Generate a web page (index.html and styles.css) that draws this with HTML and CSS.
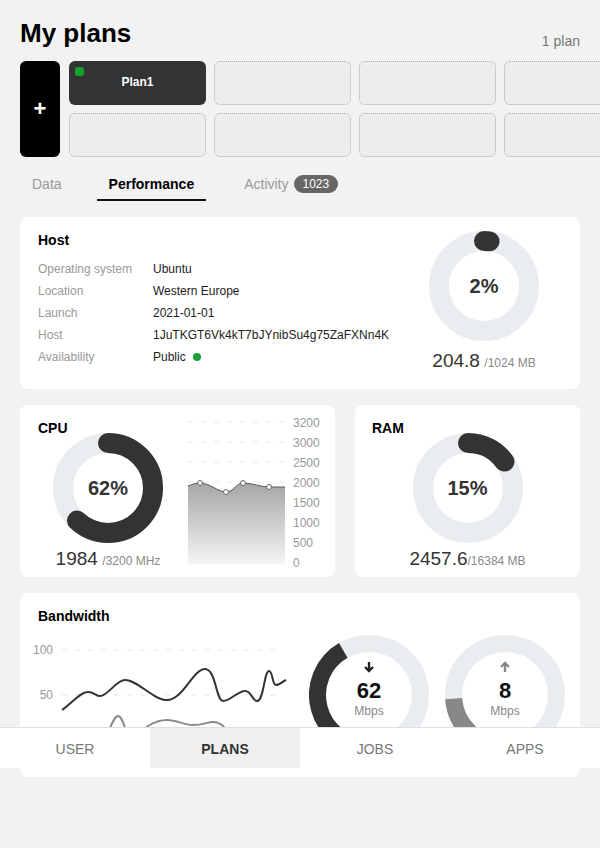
FILE: index.html
```html
<!DOCTYPE html>
<html lang="en">
<head>
<meta charset="utf-8">
<title>My plans</title>
<link rel="stylesheet" href="styles.css">
</head>
<body>
<div class="page">
  <header class="header">
    <h1 class="title">My plans</h1>
    <span class="count">1 plan</span>
  </header>

  <section class="plans">
    <button class="add">+</button>
    <div class="plan-grid">
      <div class="tile active"><span class="tile-dot"></span>Plan1</div>
      <div class="tile empty"></div>
      <div class="tile empty"></div>
      <div class="tile empty"></div>
      <div class="tile empty"></div>
      <div class="tile empty"></div>
      <div class="tile empty"></div>
      <div class="tile empty"></div>
    </div>
  </section>

  <nav class="tabs">
    <a class="tab">Data</a>
    <a class="tab current">Performance</a>
    <a class="tab tab-last">Activity <span class="badge">1023</span></a>
  </nav>

  <section class="card host">
    <div class="host-info">
      <h2 class="card-title">Host</h2>
      <div class="info">
        <span class="info-label">Operating system</span><span class="info-value">Ubuntu</span>
        <span class="info-label">Location</span><span class="info-value">Western Europe</span>
        <span class="info-label">Launch</span><span class="info-value">2021-01-01</span>
        <span class="info-label">Host</span><span class="info-value">1JuTKGT6Vk4kT7bJYnibSu4g75ZaFXNn4K</span>
        <span class="info-label">Availability</span><span class="info-value">Public <span class="green-dot"></span></span>
      </div>
    </div>
    <div class="gauge">
      <div class="ring">
        <svg class="ring-svg" viewBox="0 0 110 110">
          <circle class="track" cx="55" cy="55" r="45"/>
          <circle class="arc" cx="55" cy="55" r="45" stroke-dasharray="5.65 300" transform="rotate(-90 55 55)"/>
        </svg>
        <span class="ring-label">2%</span>
      </div>
      <div class="amount"><span class="amount-big">204.8</span> <span class="amount-small">/1024 MB</span></div>
    </div>
  </section>

  <div class="row">
    <section class="card cpu">
      <div class="cpu-left">
        <h2 class="card-title">CPU</h2>
        <div class="ring ring-offset">
          <svg class="ring-svg" viewBox="0 0 110 110">
            <circle class="track" cx="55" cy="55" r="45"/>
            <circle class="arc" cx="55" cy="55" r="45" stroke-dasharray="175.3 300" transform="rotate(-90 55 55)"/>
          </svg>
          <span class="ring-label">62%</span>
        </div>
        <div class="amount amount-tight"><span class="amount-big">1984</span> <span class="amount-small">/3200 MHz</span></div>
      </div>
      <svg class="cpu-chart" width="137" height="160" viewBox="0 0 137 160">
        <defs>
          <linearGradient id="cpuFill" x1="0" y1="0" x2="0" y2="1">
            <stop offset="0" stop-color="#a6a6a6"/>
            <stop offset="1" stop-color="#f5f5f5"/>
          </linearGradient>
        </defs>
        <g class="grid-lines">
          <line x1="0" y1="10" x2="97" y2="10"/>
          <line x1="0" y1="30" x2="97" y2="30"/>
          <line x1="0" y1="50" x2="97" y2="50"/>
          <line x1="0" y1="70" x2="97" y2="70"/>
          <line x1="0" y1="90" x2="97" y2="90"/>
          <line x1="0" y1="110" x2="97" y2="110"/>
          <line x1="0" y1="130" x2="97" y2="130"/>
          <line x1="0" y1="150" x2="97" y2="150"/>
        </g>
        <path d="M0,74 C5,72 8,71 12,71 C22,71 30,80 38,80 C46,80 48,71 55,71 C65,71 72,75 81,75 C88,75 92,75 97,75 L97,152 L0,152 Z" fill="url(#cpuFill)"/>
        <path d="M0,74 C5,72 8,71 12,71 C22,71 30,80 38,80 C46,80 48,71 55,71 C65,71 72,75 81,75 C88,75 92,75 97,75" fill="none" stroke="#555" stroke-width="1"/>
        <g class="pts">
          <circle cx="12" cy="71" r="2.5"/>
          <circle cx="38" cy="80" r="2.5"/>
          <circle cx="55" cy="71" r="2.5"/>
          <circle cx="81" cy="75" r="2.5"/>
        </g>
        <g class="axis">
          <text x="105" y="14.5">3200</text>
          <text x="105" y="34.5">3000</text>
          <text x="105" y="54.5">2500</text>
          <text x="105" y="74.5">2000</text>
          <text x="105" y="94.5">1500</text>
          <text x="105" y="114.5">1000</text>
          <text x="105" y="134.5">500</text>
          <text x="105" y="154.5">0</text>
        </g>
      </svg>
    </section>

    <section class="card ram">
      <h2 class="card-title">RAM</h2>
      <div class="ring ring-offset">
        <svg class="ring-svg" viewBox="0 0 110 110">
          <circle class="track" cx="55" cy="55" r="45"/>
          <circle class="arc" cx="55" cy="55" r="45" stroke-dasharray="42.4 300" transform="rotate(-90 55 55)"/>
        </svg>
        <span class="ring-label">15%</span>
      </div>
      <div class="amount amount-tight"><span class="amount-big">2457.6</span><span class="amount-small">/16384 MB</span></div>
    </section>
  </div>

  <section class="card bw">
    <h2 class="card-title">Bandwidth</h2>
    <div class="bw-body">
      <svg class="bw-chart" width="270" height="132" viewBox="0 0 270 132">
        <g class="grid-lines">
          <line x1="34" y1="15" x2="255" y2="15"/>
          <line x1="34" y1="60" x2="255" y2="60"/>
          <line x1="34" y1="105" x2="255" y2="105"/>
        </g>
        <g class="axis axis-end">
          <text x="25" y="19">100</text>
          <text x="25" y="64">50</text>
          <text x="25" y="109">0</text>
        </g>
        <path d="M66,118 C78,110 84,81 90,81 C96,81 98,104 106,110 C112,114 114,96 120,91 C128,86 134,85 139,85 C150,85 155,90 165,90 C175,90 180,87 185,87 C195,87 198,95 205,105 C215,118 225,112 232,95 C236,88 242,100 250,112" fill="none" stroke="#8a8a8a" stroke-width="2"/>
        <path d="M34,75 C44,68 52,57 60,57 C66,57 68,61 72,61 C80,61 88,45 97,45 C110,45 125,65 139,65 C155,65 165,34 177,34 C188,34 188,66 195,66 C202,66 210,56 217,56 C224,56 224,66 229,66 C236,66 236,36 241,36 C245,36 244,50 248,50 C252,50 255,46 258,45" fill="none" stroke="#333" stroke-width="2"/>
      </svg>
      <div class="bw-ring">
        <svg class="bw-svg" viewBox="0 0 120 120">
          <circle class="bw-track" cx="60" cy="60" r="51.5"/>
          <path class="bw-arc dark" d="M60,111.5 A51.5,51.5 0 0 1 34.25,15.4"/>
        </svg>
        <div class="bw-inner">
          <svg class="arrow" viewBox="0 0 12 12"><path d="M6,1 V10 M2,6 L6,10 L10,6" fill="none" stroke="#222" stroke-width="2.4"/></svg>
          <span class="bw-num">62</span>
          <span class="bw-unit">Mbps</span>
        </div>
      </div>
      <div class="bw-ring">
        <svg class="bw-svg" viewBox="0 0 120 120">
          <circle class="bw-track" cx="60" cy="60" r="51.5"/>
          <path class="bw-arc light" d="M60,111.5 A51.5,51.5 0 0 1 8.63,63.6"/>
        </svg>
        <div class="bw-inner">
          <svg class="arrow" viewBox="0 0 12 12"><path d="M6,11 V2 M2,6 L6,2 L10,6" fill="none" stroke="#888" stroke-width="2.4"/></svg>
          <span class="bw-num">8</span>
          <span class="bw-unit">Mbps</span>
        </div>
      </div>
    </div>
  </section>
</div>

<nav class="bottom-nav">
  <a class="nav-item">USER</a>
  <a class="nav-item active">PLANS</a>
  <a class="nav-item">JOBS</a>
  <a class="nav-item">APPS</a>
</nav>
</body>
</html>
```

FILE: styles.css
```css
* { box-sizing: border-box; }

html, body {
  margin: 0;
  padding: 0;
  background: #f2f2f2;
  font-family: "Liberation Sans", Arial, sans-serif;
  color: #222;
  overflow: hidden;
}

.page {
  padding: 18px 20px 0 20px;
}

.header {
  display: flex;
  justify-content: space-between;
  align-items: flex-end;
}

.title {
  margin: 0;
  font-size: 26px;
  line-height: 30px;
  font-weight: bold;
  color: #000;
}

.count {
  font-size: 14px;
  line-height: 16px;
  color: #777;
  position: relative;
  top: 1px;
}

.plans {
  display: flex;
  gap: 9px;
  margin-top: 13px;
  margin-right: -20px;
}

.add {
  flex: 0 0 40px;
  height: 96px;
  border: none;
  border-radius: 6px;
  background: #000;
  color: #fff;
  font-family: "Liberation Sans", Arial, sans-serif;
  font-size: 22px;
  font-weight: bold;
  padding: 0;
}

.plan-grid {
  flex: 1;
  min-width: 0;
  overflow: hidden;
  display: grid;
  grid-template-rows: 44px 44px;
  grid-auto-flow: column;
  grid-auto-columns: 137px;
  gap: 8px;
}

.tile {
  border-radius: 6px;
  position: relative;
}

.tile.active {
  background: #333;
  color: #fff;
  font-size: 12px;
  font-weight: bold;
  display: flex;
  align-items: center;
  justify-content: center;
  padding-bottom: 2px;
}

.tile-dot {
  position: absolute;
  left: 6px;
  top: 6px;
  width: 9px;
  height: 9px;
  border-radius: 3px;
  background: #17a033;
}

.tile.empty {
  background: #ededed;
  border: 1px dotted #aaa;
}

.tabs {
  display: flex;
  gap: 23px;
  margin-top: 9px;
}

.tab {
  display: flex;
  align-items: center;
  height: 35px;
  padding: 3px 12px 0;
  line-height: 16px;
  font-size: 14px;
  color: #999;
  border-bottom: 2px solid transparent;
}

.tab-last { margin-left: 3px; }

.tab.current {
  color: #000;
  font-weight: bold;
  border-bottom-color: #111;
}

.badge {
  display: inline-block;
  margin-left: 5px;
  height: 18px;
  line-height: 18px;
  padding: 0 9px;
  border-radius: 9px;
  background: #666;
  color: #fff;
  font-size: 12px;
}

.card {
  background: #fff;
  border-radius: 8px;
}

.card-title {
  margin: 0;
  font-size: 14px;
  line-height: 14px;
  font-weight: bold;
  color: #000;
}

.host {
  margin-top: 16px;
  height: 172px;
  padding: 16px 36px 0 18px;
  display: flex;
  justify-content: space-between;
}

.info {
  margin-top: 11px;
  display: grid;
  grid-template-columns: 115px auto;
  font-size: 12px;
  line-height: 22px;
}

.info-label { color: #999; }
.info-value { color: #222; display: flex; align-items: center; }

.green-dot {
  display: inline-block;
  width: 8px;
  height: 8px;
  border-radius: 50%;
  background: #1a9e35;
  margin-left: 7px;
}

.gauge {
  width: 120px;
  margin-top: -2px;
  display: flex;
  flex-direction: column;
  align-items: center;
}

.ring {
  display: grid;
  place-items: center;
  width: 110px;
  height: 110px;
}

.ring > * { grid-area: 1 / 1; }

.ring-svg {
  width: 110px;
  height: 110px;
  display: block;
}

.track {
  fill: none;
  stroke: #eaedf0;
  stroke-width: 20;
}

.arc {
  fill: none;
  stroke: #333;
  stroke-width: 20;
  stroke-linecap: round;
}

.ring-label {
  font-size: 20px;
  font-weight: bold;
  color: #333;
}

.amount {
  margin-top: 9px;
  line-height: 22px;
  white-space: nowrap;
  text-align: center;
}

.amount-tight { margin-top: 5px; }

.amount-big {
  font-size: 19px;
  color: #333;
}

.amount-small {
  font-size: 12px;
  color: #888;
}

.row {
  display: flex;
  gap: 20px;
  margin-top: 16px;
}

.cpu {
  flex: 0 0 315px;
  height: 172px;
  padding: 16px 10px 0 18px;
  display: flex;
  gap: 10px;
}

.cpu-left {
  width: 140px;
  display: flex;
  flex-direction: column;
  align-items: center;
}

.cpu-left .card-title { align-self: flex-start; }

.ring-offset { margin-top: -2px; }

.cpu-chart {
  margin-top: -9px;
  display: block;
}

.grid-lines line {
  stroke: #e8e8e8;
  stroke-width: 1;
  stroke-dasharray: 5 8;
}

.pts circle {
  fill: #fff;
  stroke: #666;
  stroke-width: 1;
}

.axis text {
  font-family: "Liberation Sans", Arial, sans-serif;
  font-size: 12px;
  fill: #999;
}

.axis-end text { text-anchor: end; }

.ram {
  flex: 1;
  height: 172px;
  padding: 16px 17px 0 17px;
  display: flex;
  flex-direction: column;
  align-items: center;
}

.ram .card-title { align-self: flex-start; }

.bw {
  margin-top: 16px;
  height: 184px;
  padding: 16px 15px 0 18px;
}

.bw-body {
  display: flex;
  margin-top: 12px;
}

.bw-chart {
  display: block;
  margin-left: -10px;
  margin-right: 11px;
}

.bw-ring {
  display: grid;
  width: 120px;
  height: 120px;
}

.bw-ring + .bw-ring { margin-left: 16px; }

.bw-ring > * { grid-area: 1 / 1; }

.bw-svg {
  width: 120px;
  height: 120px;
  display: block;
}

.bw-track {
  fill: none;
  stroke: #eaedf0;
  stroke-width: 17;
}

.bw-arc {
  fill: none;
  stroke-width: 17;
}

.bw-arc.dark { stroke: #333; }
.bw-arc.light { stroke: #888; }

.bw-inner {
  display: flex;
  flex-direction: column;
  align-items: center;
  padding-top: 26px;
}

.arrow {
  width: 12px;
  height: 12px;
  display: block;
}

.bw-num {
  margin-top: 7px;
  font-size: 22px;
  line-height: 22px;
  font-weight: bold;
  color: #111;
}

.bw-unit {
  margin-top: 2px;
  font-size: 12px;
  line-height: 14px;
  color: #888;
}

.bottom-nav {
  position: absolute;
  top: 727px;
  left: 0;
  width: 600px;
  height: 41px;
  background: #fff;
  border-top: 1px solid #e0e0e0;
  display: flex;
}

.nav-item {
  flex: 1;
  display: flex;
  align-items: center;
  justify-content: center;
  padding-top: 1px;
  font-size: 14px;
  color: #777;
}

.nav-item.active {
  background: #f0f0f0;
  color: #333;
  font-weight: bold;
}
```
